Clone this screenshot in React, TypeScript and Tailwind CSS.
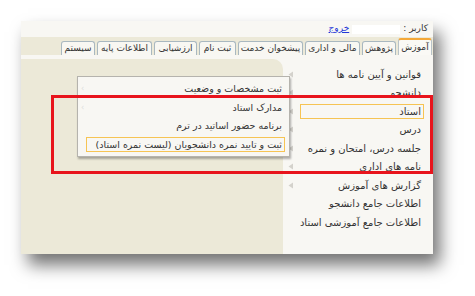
import React from 'react';

const tabs = [
  { label: 'آموزش', w: 'w-[34px]', active: true },
  { label: 'پژوهش', w: 'w-[34px]' },
  { label: 'مالی و اداری', w: 'w-[55px]' },
  { label: 'پیشخوان خدمت', w: 'w-[65px]' },
  { label: 'ثبت نام', w: 'w-[37px]' },
  { label: 'ارزشیابی', w: 'w-[43px]' },
  { label: 'اطلاعات پایه', w: 'w-[55px]' },
  { label: 'سیستم', w: 'w-[34px]' },
];

const menu = [
  { label: 'قوانین و آیین نامه ها', arrow: true },
  { label: 'دانشجو', arrow: true },
  { label: 'استاد', arrow: true, selected: true },
  { label: 'درس', arrow: true },
  { label: 'جلسه درس، امتحان و نمره', arrow: true },
  { label: 'نامه های اداری', arrow: true },
  { label: 'گزارش های آموزش', arrow: true },
  { label: 'اطلاعات جامع دانشجو' },
  { label: 'اطلاعات جامع آموزشی استاد' },
];

const sub = [
  { label: 'ثبت مشخصات و وضعیت', arrow: true },
  { label: 'مدارک استاد', arrow: true },
  { label: 'برنامه حضور اساتید در ترم' },
  { label: 'ثبت و تایید نمره دانشجویان (لیست نمره استاد)', selected: true },
];

function Arrow() {
  return (
    <svg width="6" height="7" viewBox="0 0 6 7" className="shrink-0">
      <path d="M5 0.5 L0.5 3.5 L5 6.5 Z" fill="#d4d2cc" />
    </svg>
  );
}

export default function App() {
  return (
    <div className="w-[475px] h-[296px] bg-white pt-[21px] pl-[21px] overflow-hidden" style={{ fontFamily: '"DejaVu Sans", sans-serif' }}>
      <div className="relative w-[412px] h-[233px] bg-[#f8f7f3] flex flex-col shadow-[7px_11px_16px_rgba(0,0,0,0.55)]">
        {/* user row */}
        <div dir="rtl" className="h-[16px] flex items-center pr-[5px] gap-[3px] text-[9px] text-[#333]">
          <span>کاربر :</span>
          <span className="w-[48px] h-[9px] bg-white" />
          <span className="text-[#2438d8] underline">خروج</span>
        </div>

        {/* tabs */}
        <div dir="rtl" className="h-[18px] bg-[#ece9d8] flex items-end gap-[2px] pr-[1px]">
          {tabs.map((t) => (
            <div
              key={t.label}
              className={
                t.active
                  ? `${t.w} h-[17px] bg-[#faf9f5] border-x border-[#b8c3c8] border-t-2 border-t-[#f4a838] rounded-t-[3px] flex items-center justify-center text-[9px] text-[#333] whitespace-nowrap`
                  : `${t.w} h-[14px] bg-[#f8f7f2] border border-b-0 border-[#a9b8c0] rounded-t-[3px] flex items-center justify-center text-[9px] text-[#333] whitespace-nowrap`
              }
            >
              {t.label}
            </div>
          ))}
        </div>

        {/* body */}
        <div className="flex-1 flex pt-[1px]">
          <div className="w-[267px] mt-[3px] bg-[#ece9d8] rounded-tr-[10px]" />
          <div className="flex-1 pt-[9px] flex flex-col">
            {menu.map((m) => (
              <div key={m.label} className="h-[18.5px] flex items-center pl-[5px] pr-[9px]">
                <div className="w-[7px] flex">{m.arrow && <Arrow />}</div>
                <div
                  dir="rtl"
                  className={
                    m.selected
                      ? 'flex-1 ml-[5px] h-[15px] border border-[#f6c453] flex items-center pr-[2px] text-[10px] text-[#333]'
                      : 'flex-1 ml-[5px] flex items-center pr-[3px] text-[10px] text-[#333] whitespace-nowrap'
                  }
                >
                  {m.label}
                </div>
              </div>
            ))}
          </div>
        </div>

        {/* submenu popup */}
        <div className="absolute left-[56px] top-[55px] w-[213px] h-[81px] bg-[#f8f7f3] border border-[#b5b3ad] shadow-[1px_2px_2px_rgba(0,0,0,0.3)] pt-[3px] flex flex-col">
          {sub.map((s) => (
            <div key={s.label} className="h-[18.5px] flex items-center pl-[3px] pr-[4px]">
              <div className="w-[5px] text-[8px] leading-none text-[#ddd]">{s.arrow ? '‹' : ''}</div>
              <div
                dir="rtl"
                className={
                  s.selected
                    ? 'flex-1 h-[15px] border border-[#f6c453] flex items-center pr-[2px] text-[9.5px] text-[#333] whitespace-nowrap'
                    : 'flex-1 flex items-center pr-[3px] text-[9.5px] text-[#333] whitespace-nowrap'
                }
              >
                {s.label}
              </div>
            </div>
          ))}
        </div>

        {/* red annotation */}
        <div className="absolute left-[30px] top-[74px] w-[382px] h-[79px] border-[3px] border-[#e8141c]" />
      </div>
    </div>
  );
}
